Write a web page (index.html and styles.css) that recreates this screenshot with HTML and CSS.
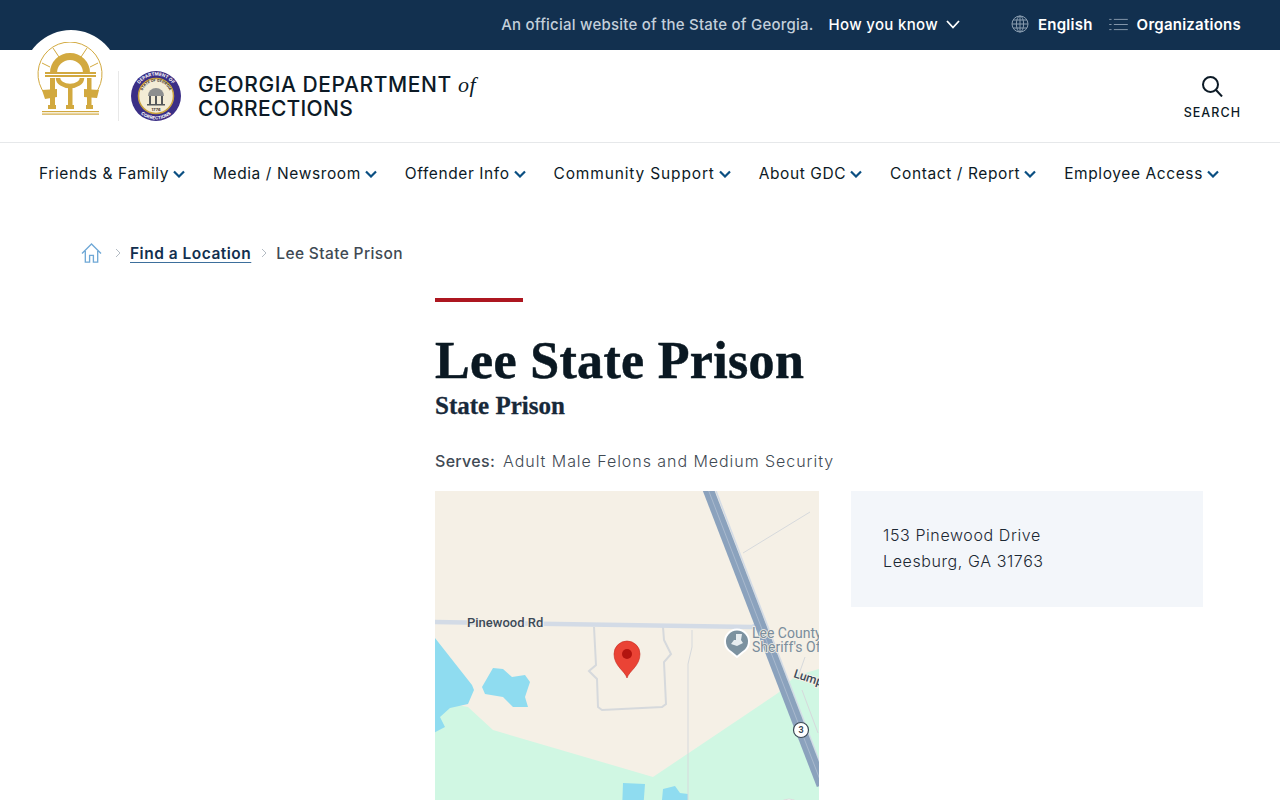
FILE: index.html
```html
<!DOCTYPE html>
<html lang="en">
<head>
  <meta charset="UTF-8">
  <meta name="viewport" content="width=device-width, initial-scale=1.0">
  <title>Lee State Prison</title>
  <link rel="stylesheet" href="styles.css">
</head>
<body>
  <div class="topbar">
    <span class="official">An official website of the State of Georgia.</span>
    <a class="how" href="#">How you know
      <svg class="how-arrow" viewBox="0 0 14 9"><path d="M1 1l6 6.5L13 1"/></svg>
    </a>
    <a class="top-link lang" href="#">
      <svg class="top-icon" viewBox="0 0 18 18"><circle cx="9" cy="9" r="8"/><ellipse cx="9" cy="9" rx="3.6" ry="8"/><path d="M9 1v16M1 9h16M2 5h14M2 13h14"/></svg>
      English
    </a>
    <a class="top-link" href="#">
      <svg class="top-icon list-icon" viewBox="0 0 20 14"><path d="M5 1.500h15M5 7h15M5 12.500h15M0 1.500h2.500M0 7h2.500M0 12.500h2.500"/></svg>
      Organizations
    </a>
  </div>

  <header class="header">
    <div class="seal-back"></div>
    <a class="brand" href="#">
      <svg class="ga-seal" viewBox="0 0 66 74">
        <g fill="none" stroke="#d2a93f">
          <path stroke-width="1" d="M8 52A32 32 0 1 1 58 52"/>
          <path stroke-width="1" d="M16 6l6 9M50 6l-6 9M5 21l8 4M61 21l-8 4"/>
          <path stroke-width="7" d="M16.500 31a16.500 16.500 0 0 1 33 0"/>
          <path stroke-width="4.500" d="M21 36a12 8 0 0 0 24 0"/>
        </g>
        <g fill="#d2a93f">
          <rect x="8" y="30" width="51" height="2"/>
          <rect x="8" y="33" width="51" height="2"/>
          <rect x="13" y="36" width="5" height="27"/>
          <rect x="31" y="43" width="4.500" height="20"/>
          <rect x="50" y="36" width="4.500" height="27"/>
          <path d="M5 48l15-1v8L8 57z"/>
          <path d="M47 47l15 1-2 8-13-1z"/>
          <rect x="11" y="63" width="8" height="4"/>
          <rect x="29" y="63" width="8" height="4"/>
          <rect x="49" y="63" width="7" height="4"/>
          <rect x="5" y="69" width="57" height="1.200"/>
          <rect x="5" y="71.500" width="57" height="1.200"/>
        </g>
      </svg>
      <svg class="gdc-seal" viewBox="0 0 50 50">
        <defs>
          <path id="ring-top" d="M4.500 25a20.500 20.500 0 0 1 41 0"/>
          <path id="ring-bottom" d="M1.500 25a23.500 23.500 0 0 0 47 0"/>
          <path id="ring-inner" d="M10.500 25a14.500 14.500 0 0 1 29 0"/>
        </defs>
        <circle cx="25" cy="25" r="25" fill="#3b2f86"/>
        <circle cx="25" cy="25" r="17.500" fill="#f3ecd6" stroke="#c9a240" stroke-width="1.500"/>
        <text class="seal-text"><textPath href="#ring-top" startOffset="50%">DEPARTMENT OF</textPath></text>
        <text class="seal-text"><textPath href="#ring-bottom" startOffset="50%">CORRECTIONS</textPath></text>
        <text class="seal-inner"><textPath href="#ring-inner" startOffset="50%">STATE OF GEORGIA</textPath></text>
        <path d="M17 25a8 8 0 0 1 16 0z" fill="#8d8f8f"/>
        <path d="M18 25h2v8h-2zM24 25h2v8h-2zM30 25h2v8h-2zM16 33h18v1.500H16z" fill="#55585a"/>
        <text class="seal-year" x="25" y="39.500">1776</text>
      </svg>
      <span class="brand-name">GEORGIA DEPARTMENT <em>of</em><br><span class="brand-second">CORRECTIONS</span></span>
    </a>
    <a class="search" href="#">
      <svg class="search-icon" viewBox="0 0 22 22"><circle cx="9.500" cy="9.500" r="7.500"/><path d="M15 15l6 6.500"/></svg>
      <span>SEARCH</span>
    </a>
  </header>

  <nav class="nav">
    <a href="#">Friends &amp; Family<svg viewBox="0 0 12 8"><path d="M1 1.500l5 5 5-5"/></svg></a>
    <a href="#">Media / Newsroom<svg viewBox="0 0 12 8"><path d="M1 1.500l5 5 5-5"/></svg></a>
    <a href="#">Offender Info<svg viewBox="0 0 12 8"><path d="M1 1.500l5 5 5-5"/></svg></a>
    <a class="wide" href="#">Community Support<svg viewBox="0 0 12 8"><path d="M1 1.500l5 5 5-5"/></svg></a>
    <a href="#">About GDC<svg viewBox="0 0 12 8"><path d="M1 1.500l5 5 5-5"/></svg></a>
    <a href="#">Contact / Report<svg viewBox="0 0 12 8"><path d="M1 1.500l5 5 5-5"/></svg></a>
    <a href="#">Employee Access<svg viewBox="0 0 12 8"><path d="M1 1.500l5 5 5-5"/></svg></a>
  </nav>

  <div class="crumbs">
    <svg class="home" viewBox="0 0 22 21"><path d="M1 11L11 1l10 10M4.500 8.500V20h4.500v-7h4v7h4.500V8.500"/></svg>
    <svg class="sep" viewBox="0 0 6 10"><path d="M1 1l4 4-4 4"/></svg>
    <a href="#">Find a Location</a>
    <svg class="sep" viewBox="0 0 6 10"><path d="M1 1l4 4-4 4"/></svg>
    <span>Lee State Prison</span>
  </div>

  <main class="main">
    <div class="rule"></div>
    <h1>Lee State Prison</h1>
    <h2>State Prison</h2>
    <p class="serves"><strong>Serves:</strong> <span>Adult Male Felons and Medium Security</span></p>
    <div class="details">
      <svg class="map" viewBox="0 0 384 320">
        <rect width="384" height="320" fill="#f5f0e6"/>
        <path fill="#d0f7e3" d="M0 320V210l33 6 25 23 160 47 125-84 17-17 24-7v142z"/>
        <path fill="#8fdcf0" d="M0 147l37 47 2 5-6 14-18 4-10 9 5 10-15 8z"/>
        <path fill="#8fdcf0" d="M58 177l-11 19 3 7 18 3 10 10h15l-3-10 5-15-5-7-13 2-9-8z"/>
        <path fill="#8fdcf0" d="M188 292l22 1-2 27h-21zM228 298l12-3 5 7 8 1v17h-27z"/>
        <g fill="none" stroke="#d6d9dc">
          <path stroke-width="2" d="M159 136l2 38-7 6 8 8 1 28 4 3 60-3 4-3-2-42 7-8-7-14-1-13"/>
          <path stroke-width="1" d="M257 139v17l-4 17v147M308 62l67-41M370 166l-7 20M367 199l16 43"/>
        </g>
        <path fill="none" stroke="#d3dbe6" stroke-width="4.500" d="M0 131l317 5 9-4"/>
        <path fill="none" stroke="#d3dbe6" stroke-width="1.500" d="M281 0l104 272"/>
        <path fill="none" stroke="#8ba2bd" stroke-width="11" d="M273-2l114 296"/>
        <path fill="none" stroke="#a9b9cd" stroke-width="1" d="M273-2l114 296"/>
        <text class="map-road" x="32" y="136">Pinewood Rd</text>
        <path d="M302 166l-6-5a12 12 0 1 1 12 0z" fill="#7c92a0" stroke="#fff" stroke-width="2"/>
        <path d="M301 143h6l-1 6 2 3-6 3-6-2 3-4h2z" fill="#e7edf0"/>
        <text class="map-label" x="317" y="147">Lee County</text>
        <text class="map-label" x="317" y="161">Sheriff's Office</text>
        <text class="map-road small" transform="translate(358 186) rotate(18)">Lumpkin</text>
        <circle cx="366" cy="239" r="7.500" fill="#fff" stroke="#3c4a55" stroke-width="1.200"/>
        <text class="map-shield" x="366" y="242">3</text>
        <circle cx="354" cy="321" r="13" fill="#fff" stroke="#dcdcdc"/>
        <path d="M192 187c-2-7-13-12-13-24a13 13 0 0 1 26 0c0 12-11 17-13 24z" fill="#ea4335" stroke="#c5281f" stroke-width=".6"/>
        <circle cx="192" cy="163" r="5" fill="#b3140f"/>
      </svg>
      <div class="address">153 Pinewood Drive<br>Leesburg, GA 31763</div>
    </div>
  </main>
</body>
</html>
```

FILE: styles.css
```css
body {
  margin: 0;
  font-family: Inter, "Liberation Sans", sans-serif;
  color: #0c1a26;
  background: #fff;
  overflow: hidden;
}

a {
  color: inherit;
  text-decoration: none;
}

.topbar {
  display: flex;
  align-items: center;
  justify-content: flex-end;
  box-sizing: border-box;
  height: 50px;
  padding: 0 39px 2px 0;
  background: #12304f;
  color: #fff;
  font-size: 15px;
  font-weight: 500;
}

.official {
  color: #c3cfdb;
  letter-spacing: 0.23px;
  margin-right: 15px;
}

.how {
  display: flex;
  align-items: center;
  letter-spacing: 0.32px;
  margin-right: 51px;
}

.how-arrow {
  width: 14px;
  height: 9px;
  margin-left: 8px;
  fill: none;
  stroke: #fff;
  stroke-width: 1.800;
}

.top-link {
  display: flex;
  align-items: center;
  font-weight: 600;
  letter-spacing: 0.25px;
}

.lang {
  margin-right: 16px;
}

.top-icon {
  width: 18px;
  height: 18px;
  margin-right: 9px;
  fill: none;
  stroke: #8a9db0;
  stroke-width: 1;
}

.list-icon {
  width: 19px;
  height: 13px;
}

.header {
  position: relative;
  display: flex;
  align-items: center;
  justify-content: space-between;
  height: 92px;
  padding: 0 39px 0 37px;
  border-bottom: 1px solid #e6e8ea;
}

/* white half circle that pokes up into the blue bar */
.seal-back {
  position: absolute;
  left: 23px;
  top: -20px;
  width: 96px;
  height: 96px;
  border-radius: 50%;
  background: #fff;
}

.brand {
  position: relative;
  display: flex;
  align-items: flex-start;
  height: 74px;
}

.ga-seal {
  width: 66px;
  height: 74px;
  margin-top: -17px;
  padding-right: 15px;
}

.gdc-seal {
  width: 50px;
  height: 50px;
  margin-top: 12px;
  padding-left: 12px;
  border-left: 1px solid #e8e8e8;
}

.seal-text {
  font-size: 4.500px;
  font-weight: 700;
  fill: #fff;
  text-anchor: middle;
}

.seal-inner {
  font-size: 3.600px;
  font-weight: 700;
  fill: #3b2f2a;
  text-anchor: middle;
}

.seal-year {
  font-size: 4px;
  font-weight: 700;
  fill: #3b2f2a;
  text-anchor: middle;
}

.brand-name {
  margin: 14px 0 0 17px;
  font-size: 21px;
  font-weight: 500;
  line-height: 24px;
  letter-spacing: 0.58px;
}

.brand-second {
  letter-spacing: 0.3px;
}

.brand-name em {
  font-family: "Liberation Serif", serif;
  font-size: 22px;
  font-weight: 400;
}

.search {
  display: flex;
  flex-direction: column;
  align-items: center;
  font-size: 12.500px;
  font-weight: 500;
  letter-spacing: 1.050px;
}

.search-icon {
  width: 22px;
  height: 22px;
  margin: 3px 0 8px;
  fill: none;
  stroke: #0c1a26;
  stroke-width: 2;
}

.nav {
  display: flex;
  justify-content: space-between;
  padding: 20px 61px 0 39px;
  height: 41px;
  font-size: 15.500px;
  letter-spacing: 0.6px;
}

.nav a {
  display: flex;
  align-items: center;
  height: 20px;
}

.nav a.wide {
  letter-spacing: 0.85px;
}

.nav svg {
  width: 12px;
  height: 8px;
  margin: 2px 0 0 4px;
  fill: none;
  stroke: #0b4f82;
  stroke-width: 2.200;
}

.crumbs {
  display: flex;
  align-items: center;
  height: 22px;
  padding: 38px 0 0 81px;
  font-size: 15.500px;
  font-weight: 500;
  letter-spacing: 0.37px;
  color: #3f4a54;
}

.crumbs a {
  color: #12304f;
  font-weight: 600;
  letter-spacing: 0.5px;
  text-decoration: underline;
  text-decoration-color: #3d6f9c;
  text-underline-offset: 3px;
}

.home {
  width: 21px;
  height: 20px;
  margin-right: 3px;
  fill: none;
  stroke: #6fa8d6;
  stroke-width: 1.400;
}

.sep {
  width: 6px;
  height: 10px;
  margin: 0 9px 0 10px;
  fill: none;
  stroke: #b4bcc4;
  stroke-width: 1;
}

.main {
  padding: 34px 0 0 435px;
  width: 768px;
}

.rule {
  width: 88px;
  height: 4px;
  background: #ad1720;
}

h1 {
  margin: 31px 0 0;
  font-family: "Liberation Serif", serif;
  font-size: 52px;
  font-weight: 700;
  line-height: 56px;
  letter-spacing: 0.33px;
  -webkit-text-stroke: 0.5px #0a1822;
  color: #0a1822;
}

h2 {
  margin: 2px 0 0;
  font-family: "Liberation Serif", serif;
  font-size: 25px;
  font-weight: 700;
  line-height: 30px;
  -webkit-text-stroke: 0.3px #17293a;
  color: #17293a;
}

.serves {
  display: flex;
  gap: 8px;
  margin: 28px 0 0;
  font-size: 16px;
  line-height: 24px;
  color: #3f4a54;
}

.serves strong {
  font-weight: 500;
  letter-spacing: 0.3px;
}

.serves span {
  font-weight: 300;
  letter-spacing: 0.95px;
}

.details {
  display: grid;
  grid-template-columns: 384px 352px;
  gap: 32px;
  align-items: start;
  margin-top: 18px;
}

.map {
  display: block;
  width: 384px;
  height: 320px;
}

.map-road {
  font-family: Roboto, sans-serif;
  font-size: 13px;
  font-weight: 500;
  fill: #3c4a58;
  stroke: #f5f0e6;
  stroke-width: 2px;
  paint-order: stroke;
}

.map-road.small {
  font-size: 12px;
}

.map-label {
  font-family: Roboto, sans-serif;
  font-size: 14px;
  fill: #7a8d9c;
  stroke: #f5f0e6;
  stroke-width: 1.500px;
  paint-order: stroke;
}

.map-shield {
  font-family: Roboto, sans-serif;
  font-size: 9px;
  font-weight: 700;
  fill: #3c4a55;
  text-anchor: middle;
}

.address {
  padding: 31px 32px 33px;
  height: 52px;
  background: #f3f6fa;
  font-size: 16px;
  font-weight: 300;
  line-height: 26px;
  letter-spacing: 0.6px;
  color: #1c2833;
}
```
